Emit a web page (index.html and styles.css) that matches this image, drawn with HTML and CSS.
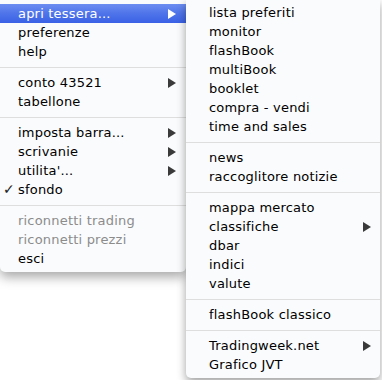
FILE: index.html
```html
<!DOCTYPE html>
<html lang="it">
<head>
<meta charset="utf-8">
<title>Menu</title>
<link rel="stylesheet" href="styles.css">
</head>
<body>
<div class="screen">
  <div class="menu main">
    <div class="item active"><span class="label">apri tessera...</span><span class="arrow"></span></div>
    <div class="item"><span class="label">preferenze</span></div>
    <div class="item"><span class="label">help</span></div>
    <div class="sep"></div>
    <div class="item"><span class="label">conto 43521</span><span class="arrow"></span></div>
    <div class="item"><span class="label">tabellone</span></div>
    <div class="sep"></div>
    <div class="item"><span class="label">imposta barra...</span><span class="arrow"></span></div>
    <div class="item"><span class="label">scrivanie</span><span class="arrow"></span></div>
    <div class="item"><span class="label">utilita'...</span><span class="arrow"></span></div>
    <div class="item"><span class="check">✓</span><span class="label">sfondo</span></div>
    <div class="sep"></div>
    <div class="item disabled"><span class="label">riconnetti trading</span></div>
    <div class="item disabled"><span class="label">riconnetti prezzi</span></div>
    <div class="item"><span class="label">esci</span></div>
  </div>
  <div class="menu sub">
    <div class="item"><span class="label">lista preferiti</span></div>
    <div class="item"><span class="label">monitor</span></div>
    <div class="item"><span class="label">flashBook</span></div>
    <div class="item"><span class="label">multiBook</span></div>
    <div class="item"><span class="label">booklet</span></div>
    <div class="item"><span class="label">compra - vendi</span></div>
    <div class="item"><span class="label">time and sales</span></div>
    <div class="sep"></div>
    <div class="item"><span class="label">news</span></div>
    <div class="item"><span class="label">raccoglitore notizie</span></div>
    <div class="sep"></div>
    <div class="item"><span class="label">mappa mercato</span></div>
    <div class="item"><span class="label">classifiche</span><span class="arrow"></span></div>
    <div class="item"><span class="label">dbar</span></div>
    <div class="item"><span class="label">indici</span></div>
    <div class="item"><span class="label">valute</span></div>
    <div class="sep"></div>
    <div class="item"><span class="label">flashBook classico</span></div>
    <div class="sep"></div>
    <div class="item"><span class="label">Tradingweek.net</span><span class="arrow"></span></div>
    <div class="item"><span class="label">Grafico JVT</span></div>
  </div>
</div>
</body>
</html>
```
FILE: styles.css
```css
html, body {
  margin: 0;
  padding: 0;
  background: #ffffff;
}
body {
  font-family: "DejaVu Sans", "Liberation Sans", sans-serif;
  font-size: 13px;
  letter-spacing: 0.2px;
  color: #000;
  width: 382px;
  height: 380px;
  overflow: hidden;
}
.screen {
  display: flex;
  align-items: flex-start;
}
.menu {
  background: #fafbfc;
  padding: 4px 0 4px;
  border-radius: 0 0 5px 5px;
  box-shadow: 0 5px 12px rgba(0, 0, 0, 0.35);
}
.main {
  width: 186px;
  position: relative;
  z-index: 1;
}
.sub {
  width: 194px;
  padding-top: 3px;
  position: relative;
  z-index: 2;
  box-shadow: 0 4px 10px rgba(0, 0, 0, 0.38);
}
.item {
  display: flex;
  align-items: center;
  height: 19px;
  line-height: 19px;
  position: relative;
  white-space: nowrap;
}
.main .item {
  padding: 0 10px 0 18px;
}
.sub .item {
  padding: 0 9px 0 23px;
}
.label {
  flex: 1;
}
.item.active {
  background: linear-gradient(to bottom, #6c8df0 0%, #4f74ea 50%, #3a61e5 100%);
  color: #fff;
}
.item.disabled {
  color: #8c8c8c;
}
.arrow {
  width: 0;
  height: 0;
  border-top: 5px solid transparent;
  border-bottom: 5px solid transparent;
  border-left: 8px solid #3a3a3a;
}
.item.active .arrow {
  border-left-color: #ffffff;
}
.check {
  position: absolute;
  left: 3px;
  top: 0;
  font-size: 14px;
  color: #222;
}
.sep {
  height: 12px;
  display: flex;
  align-items: center;
}
.sep::before {
  content: "";
  display: block;
  width: 100%;
  height: 1px;
  background: #dedede;
}
```
